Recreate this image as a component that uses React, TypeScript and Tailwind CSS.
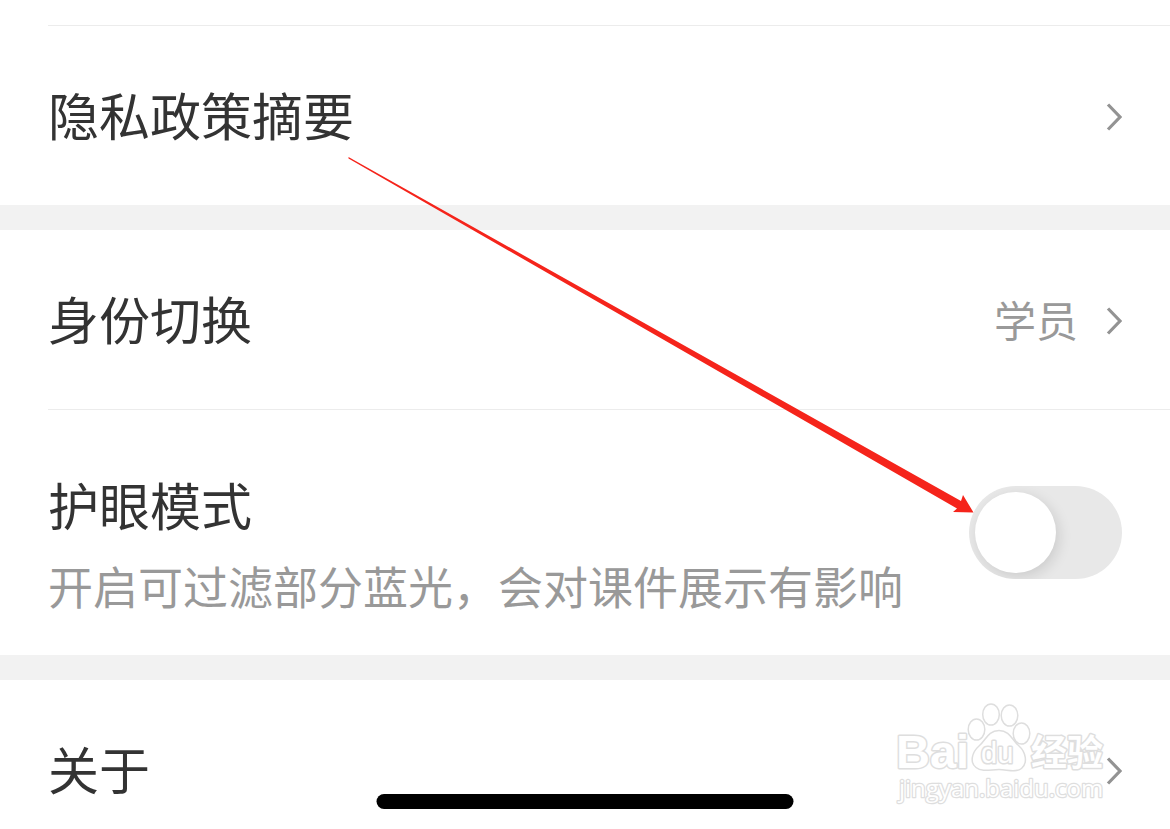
import type { ReactNode } from "react";

function Chevron() {
  return (
    <svg className="h-7 w-4 shrink-0" viewBox="0 0 16 28" fill="none" stroke="#939393" strokeWidth="3.2" aria-hidden="true">
      <path d="M2 1.500 L14 14 L2 26.500" />
    </svg>
  );
}

function LinkRow({ title, value }: { title: string; value?: string }) {
  return (
    <a href="#" className="box-content flex h-[177px] items-center justify-between pt-0.5 pr-12">
      <span className="pb-1.5 text-[51px] leading-[72px] text-[#333333]">{title}</span>
      <span className="flex items-center gap-7">
        {value && <span className="pb-1 text-[42px] leading-[60px] text-[#999999]">{value}</span>}
        <Chevron />
      </span>
    </a>
  );
}

function Group({ children }: { children: ReactNode }) {
  return <section className="divide-y divide-[#ececec] pl-12">{children}</section>;
}

function Gap() {
  return <div className="h-[25px] bg-[#f2f2f2]" />;
}

function Watermark() {
  return (
    <svg
      className="pointer-events-none absolute top-[700px] right-[58px] h-[108px] w-[220px]"
      viewBox="892 700 220 108"
      fill="#ffffff"
      stroke="#dedede"
      strokeWidth="1.5"
      strokeLinejoin="round"
      aria-hidden="true"
    >
      <g paintOrder="stroke" strokeWidth="3" fontWeight="700">
        <text x="896" y="768" fontSize="47" fontFamily="Liberation Sans, sans-serif">Bai</text>
        <text x="1031" y="766" fontSize="36" fontFamily="Noto Sans CJK SC, sans-serif">经验</text>
      </g>
      <ellipse cx="976.500" cy="729.500" rx="8.300" ry="10.500" />
      <ellipse cx="991" cy="714.500" rx="8.300" ry="10.500" />
      <ellipse cx="1009.500" cy="715.500" rx="8.300" ry="10.500" />
      <ellipse cx="1021.500" cy="733.500" rx="8.300" ry="10.500" />
      <path d="M999 730.500 C988 730.500 986 740 979.500 745.500 C971 753 970 763 976 767.500 C982 772.500 991 769.500 999 769.500 C1007 769.500 1016 773 1021.500 768.500 C1028 763 1026 752 1018.500 745.500 C1012 740 1010 730.500 999 730.500 Z" />
      <text x="981" y="763" fontSize="29" paintOrder="stroke" strokeWidth="3" fontFamily="Liberation Sans, sans-serif">du</text>
      <text x="899" y="797" fontSize="24" paintOrder="stroke" strokeWidth="2.500" fontFamily="Open Sans, sans-serif">jingyan.baidu.com</text>
    </svg>
  );
}

function Arrow() {
  return (
    <svg
      className="pointer-events-none absolute top-[150px] left-[340px] h-[370px] w-[640px]"
      viewBox="340 150 640 370"
      fill="#f5241b"
      aria-hidden="true"
    >
      <path d="M348.500 157 L961 501 L963 495 L973.500 512.500 L953 512 L957 508.500 L348.500 158.500 Z" />
    </svg>
  );
}

export default function App() {
  return (
    <main className="relative overflow-hidden bg-white font-['Noto_Sans_CJK_SC',sans-serif]">
      <div className="ml-12 h-[26px] border-b border-[#ececec]" />
      <Group>
        <LinkRow title="隐私政策摘要" />
      </Group>
      <Gap />
      <Group>
        <LinkRow title="身份切换" value="学员" />
        <div className="flex h-[245px] items-center justify-between pr-12">
          <label htmlFor="eye-care" className="flex flex-col gap-2.5 pt-6">
            <span className="text-[51px] leading-[72px] text-[#333333]">护眼模式</span>
            <span className="text-[45px] leading-[72px] text-[#999999]">开启可过滤部分蓝光，会对课件展示有影响</span>
          </label>
          <input
            id="eye-care"
            type="checkbox"
            role="switch"
            className="flex h-[93px] w-[153px] shrink-0 appearance-none items-center overflow-hidden rounded-full bg-[#e8e8e8] px-[6px] before:size-[81px] before:rounded-full before:bg-white before:shadow-[3px_4px_14px_rgba(0,0,0,0.12)] checked:justify-end"
          />
        </div>
      </Group>
      <Gap />
      <Group>
        <LinkRow title="关于" />
      </Group>
      <Watermark />
      <Arrow />
      <div className="absolute top-[794px] left-1/2 h-[15px] w-[417px] -translate-x-1/2 rounded-full bg-black" />
    </main>
  );
}
